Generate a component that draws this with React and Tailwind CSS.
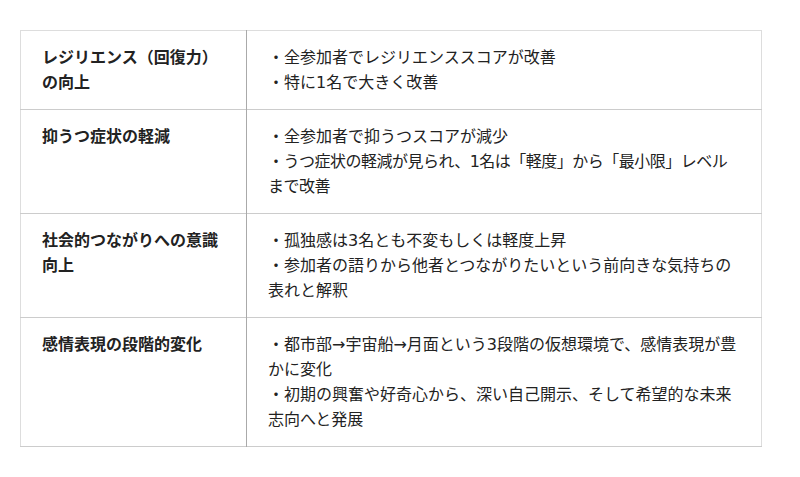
import React from "react";

const rows = [
  {
    h: ["レジリエンス（回復力）", "の向上"],
    d: ["・全参加者でレジリエンススコアが改善", "・特に1名で大きく改善"],
  },
  {
    h: ["抑うつ症状の軽減"],
    d: [
      "・全参加者で抑うつスコアが減少",
      "・うつ症状の軽減が見られ、1名は「軽度」から「最小限」レベルまで改善",
    ],
  },
  {
    h: ["社会的つながりへの意識", "向上"],
    d: [
      "・孤独感は3名とも不変もしくは軽度上昇",
      "・参加者の語りから他者とつながりたいという前向きな気持ちの表れと解釈",
    ],
  },
  {
    h: ["感情表現の段階的変化"],
    d: [
      "・都市部→宇宙船→月面という3段階の仮想環境で、感情表現が豊かに変化",
      "・初期の興奮や好奇心から、深い自己開示、そして希望的な未来志向へと発展",
    ],
  },
];

export default function App() {
  return (
    <div className="w-[800px] h-[477px] bg-white pt-[30px] pl-[20px] font-['DejaVu_Sans','Noto_Sans_CJK_JP',sans-serif]">
      <table className="w-[742px] border-collapse border border-[#dddddd] text-[16px] leading-[25px] text-[#222]">
        <tbody>
          {rows.map((r, i) => (
            <tr key={i} className="border-b border-[#cccccc] align-top">
              <td className="w-[226px] border-r border-[#aaaaaa] px-[21px] py-[14px] font-bold">
                {r.h.map((t, j) => (
                  <div key={j}>{t}</div>
                ))}
              </td>
              <td className="px-[21px] py-[14px]">
                {r.d.map((t, j) => (
                  <div
                    key={j}
                    className={t.includes("「") ? "tracking-[-0.5px]" : ""}
                  >
                    {t}
                  </div>
                ))}
              </td>
            </tr>
          ))}
        </tbody>
      </table>
    </div>
  );
}
